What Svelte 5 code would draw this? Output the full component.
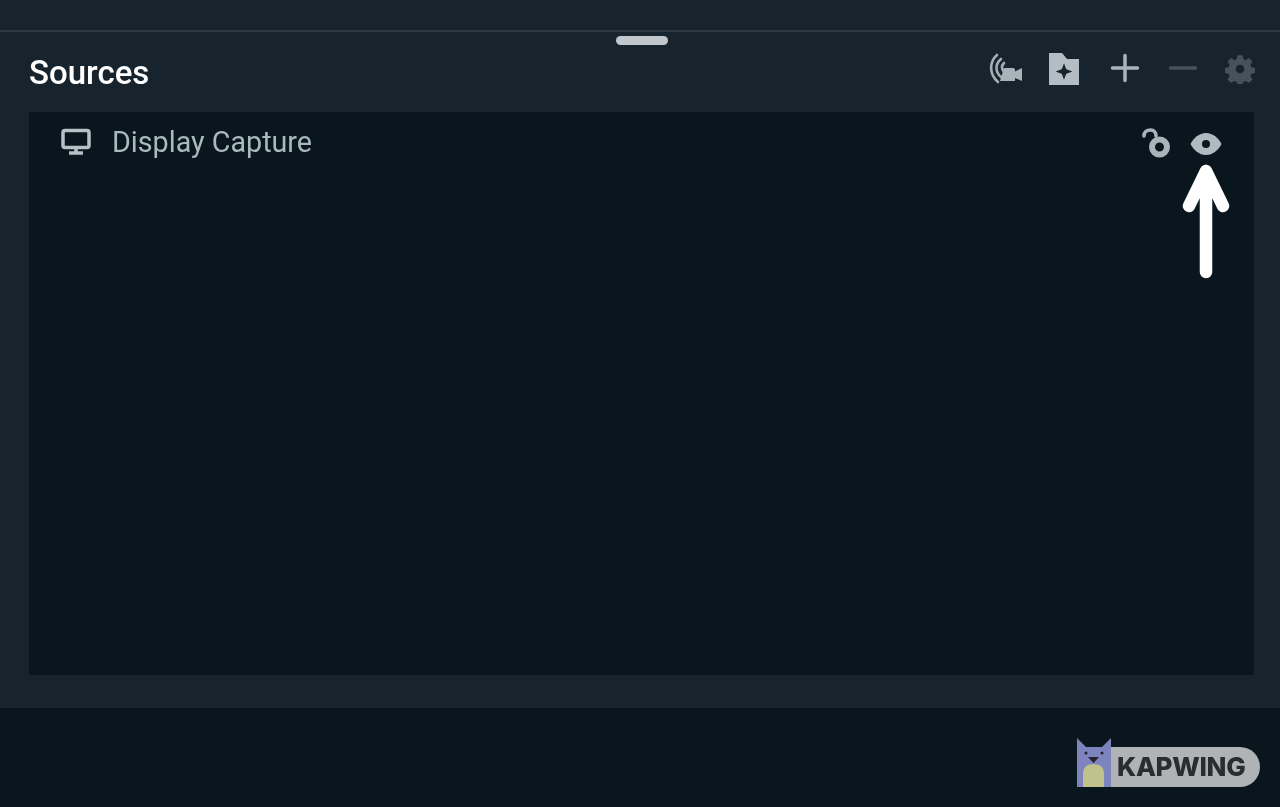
<script lang="ts">
	let sources = [{ name: 'Display Capture' }];
</script>

<div class="page">
	<div class="top-strip"></div>
	<section class="sources-panel">
		<div class="drag-handle"></div>
		<header class="panel-header">
			<h2 class="panel-title">Sources</h2>
			<div class="panel-actions">
				<!-- broadcast camera -->
				<svg class="action" width="34" height="34" viewBox="0 0 34 34" fill="none">
					<path d="M8 3C0 10 0 22 9 30M12 7C6 12 6 20 12 25M15 11c-2.500 2.500-2.500 6 0 9" stroke="#a4afb5" stroke-width="2.600" stroke-linecap="round" />
					<path d="M11 29l4-13h9c1.300 0 2 .800 2 2v1.500l7-3.500v13l-7-3v3z" fill="#a9b4ba" />
				</svg>
				<!-- add folder -->
				<svg class="action folder" width="34" height="34" viewBox="0 0 34 34">
					<path d="M2 1h13l5 6h12v26H2z" fill="#b4bdc3" />
					<path d="M17 14l1.500 4 4 1.500-4 1.500-1.500 4-1.500-4-4-1.500 4-1.500z" fill="#17242d" stroke="#17242d" stroke-width="2" />
				</svg>
				<!-- plus -->
				<svg class="action plus" width="30" height="30" viewBox="0 0 30 30">
					<path d="M15 2.500v25M2.500 15h25" stroke="#a9b4ba" stroke-width="3.500" stroke-linecap="round" />
				</svg>
				<!-- minus -->
				<svg class="action minus" width="30" height="30" viewBox="0 0 30 30">
					<path d="M2.500 15h25" stroke="#46525a" stroke-width="3.500" stroke-linecap="round" />
				</svg>
				<!-- gear -->
				<svg class="action" width="30" height="30" viewBox="0 0 24 24">
					<path fill-rule="evenodd" fill="#46525a" d="M10 1h4l.6 3 2 .9 2.600-1.700 2.800 2.800-1.700 2.600.9 2 3 .6v4l-3 .6-.9 2 1.700 2.600-2.800 2.800-2.600-1.700-2 .9-.6 3h-4l-.6-3-2-.9-2.600 1.700-2.800-2.800 1.700-2.600-.9-2-3-.6v-4l3-.6.9-2-1.700-2.600 2.800-2.800 2.600 1.700 2-.9zM12 8.500a3.500 3.500 0 1 0 0 7 3.500 3.500 0 0 0 0-7z" />
				</svg>
			</div>
		</header>

		<div class="source-list">
			{#each sources as source (source.name)}
				<div class="source-row">
					<svg class="monitor" width="32" height="28" viewBox="0 0 32 28" fill="none">
						<rect x="3" y="2.500" width="26" height="17" rx="2" stroke="#b4c2c6" stroke-width="3.500" />
						<path d="M16 20v4M9 25h14" stroke="#b4c2c6" stroke-width="3.500" />
					</svg>
					<span class="source-name">{source.name}</span>
					<div class="row-actions">
						<!-- open lock -->
						<svg class="lock" width="32" height="32" viewBox="0 0 32 32" fill="none">
							<circle cx="18.500" cy="20" r="7.500" stroke="#a9b4ba" stroke-width="6" />
							<circle cx="18.500" cy="19" r="2" fill="#09161d" />
							<path d="M18.500 19v5" stroke="#09161d" stroke-width="2" />
							<path d="M3 9C3 5 6 3 9.500 3s5.500 2.500 5.500 6" stroke="#a9b4ba" stroke-width="3.600" stroke-linecap="round" />
						</svg>
						<!-- eye -->
						<svg class="eye" width="32" height="24" viewBox="0 0 32 24">
							<path fill="#b0bbc1" d="M16 1C9 1 3.500 6 .5 12 3.500 18 9 23 16 23s12.500-5 15.500-11C28.500 6 23 1 16 1z" />
							<circle cx="16" cy="12" r="4" fill="#0a171e" />
						</svg>
					</div>
				</div>
			{/each}
		</div>
	</section>
	<div class="bottom-strip"></div>

	<!-- annotation arrow on top of the panel -->
	<svg class="arrow" width="50" height="118" viewBox="0 0 50 118" fill="none">
		<path d="M25 7v101M8 42L25 7l17 35" stroke="#fff" stroke-width="12.500" stroke-linecap="round" stroke-linejoin="round" />
	</svg>

	<!-- watermark -->
	<div class="watermark">
		<svg class="cat" width="34" height="49" viewBox="0 0 34 49">
			<path d="M0 0l9 9h16l9-9v49H0z" fill="#7c83bd" />
			<path d="M6 49V36c0-6 3-10 10.500-10S27 30 27 36v13z" fill="#c0c18d" />
			<path d="M11 19h11l-5.500 6z" fill="#23232b" />
			<circle cx="9" cy="15" r="1.500" fill="#23232b" />
			<circle cx="25" cy="15" r="1.500" fill="#23232b" />
		</svg>
		<div class="wordmark">KAPWING</div>
	</div>
</div>

<style>
	:global(body) {
		margin: 0;
		background: #09161d;
		font-family: Roboto, 'Liberation Sans', sans-serif;
	}

	.page {
		position: relative;
		width: 1280px;
		height: 807px;
		overflow: hidden;
		background: #09161d;
	}

	.top-strip {
		height: 30px;
		background: #17242d;
		border-bottom: 2px solid #2b3943;
	}

	.sources-panel {
		position: relative;
		height: 676px;
		padding: 0 26px 0 29px;
		box-sizing: border-box;
		background: #17242d;
	}

	.drag-handle {
		position: absolute;
		top: 4px;
		left: 616px;
		width: 52px;
		height: 9px;
		border-radius: 5px;
		background: #c0c8ce;
		filter: blur(0.6px);
	}

	.panel-header {
		display: flex;
		align-items: center;
		justify-content: space-between;
		height: 80px;
	}

	.panel-title {
		margin: 0;
		font-size: 33px;
		font-weight: 500;
		color: #fff;
		filter: blur(0.5px);
	}

	.panel-actions {
		display: flex;
		align-items: center;
		gap: 27px;
		margin-right: -1px;
		margin-bottom: 7px;
		filter: blur(0.6px);
	}

	.folder {
		margin: 0 1.500px 0 -3px;
	}

	.plus {
		margin: 0 1.500px 2px 0;
	}

	.minus {
		margin-bottom: 2px;
	}

	.source-list {
		height: 563px;
		background: #09161d;
	}

	.source-row {
		display: flex;
		align-items: center;
		height: 60px;
		padding: 0 31px 0 31px;
	}

	.monitor {
		margin-right: 20px;
		flex-shrink: 0;
		filter: blur(0.5px);
	}

	.source-name {
		font-size: 28.700px;
		color: #a9b9bd;
		filter: blur(0.5px);
	}

	.row-actions {
		display: flex;
		align-items: center;
		gap: 17px;
		margin-left: auto;
		margin-right: 1px;
		filter: blur(0.6px);
	}

	.lock {
		margin-top: 1px;
	}

	.eye {
		margin-top: 3px;
	}

	.arrow {
		position: absolute;
		left: 1181px;
		top: 164px;
	}

	.watermark {
		position: absolute;
		left: 1077px;
		top: 738px;
		display: flex;
		align-items: flex-end;
		filter: blur(0.4px);
	}

	.cat {
		display: block;
	}

	.wordmark {
		width: 149px;
		height: 40px;
		line-height: 40px;
		padding-left: 6px;
		box-sizing: border-box;
		background: #b0b3b5;
		border-radius: 0 20px 20px 0;
		font-family: Inter, sans-serif;
		font-size: 26px;
		font-weight: 800;
		color: #2a2c30;
		letter-spacing: -0.3px;
	}
</style>
